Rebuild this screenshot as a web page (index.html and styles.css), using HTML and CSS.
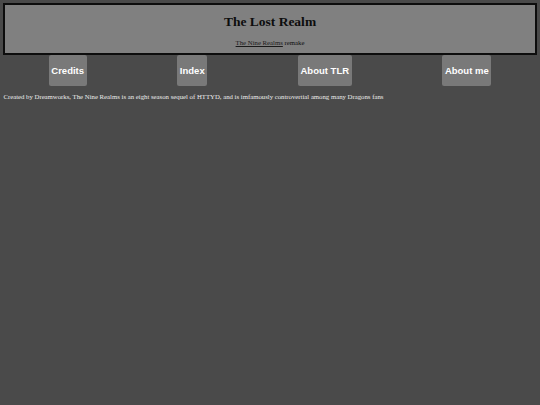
FILE: index.html
```html
<!DOCTYPE html>
<html lang="en">
<head>
<meta charset="utf-8">
<title>The Lost Realm</title>
<link rel="stylesheet" href="styles.css">
</head>
<body>
<div class="banner">
  <h1 class="title">The Lost Realm</h1>
  <p class="subtitle"><a class="sublink" href="#">The Nine Realms</a> remake</p>
</div>
<nav class="nav">
  <a class="btn" href="#">Credits</a>
  <a class="btn" href="#">Index</a>
  <a class="btn" href="#">About TLR</a>
  <a class="btn" href="#">About me</a>
</nav>
<p class="intro">Created by Dreamworks, The Nine Realms is an eight season sequel of HTTYD, and is imfamously controvertial among many Dragons fans</p>
</body>
</html>
```
FILE: styles.css
```css
html {
  background: #4a4a4a;
}
body {
  margin: 3.4px;
  background: #4a4a4a;
  font-family: "Liberation Serif", "Times New Roman", serif;
  font-size: 6.75px;
  color: #ececec;
}
.banner {
  background: #808080;
  border: 2.1px solid #0d0d0d;
  text-align: center;
  color: #0d0d0d;
}
.title {
  font-size: 13.5px;
  font-weight: bold;
  margin: 8.9px 0;
}
.subtitle {
  margin: 6.75px 0;
}
.sublink {
  color: #1a1a1a;
  text-decoration: underline;
}
.nav {
  display: flex;
  justify-content: space-around;
  align-items: flex-start;
}
.btn {
  display: block;
  background: #797979;
  color: #ffffff;
  font-family: "Liberation Sans", Arial, sans-serif;
  font-weight: bold;
  font-size: 9.5px;
  padding: 10.1px 2.5px;
  border-radius: 2.1px;
  text-decoration: none;
}
.intro {
  margin: 6.75px 0;
}
```
